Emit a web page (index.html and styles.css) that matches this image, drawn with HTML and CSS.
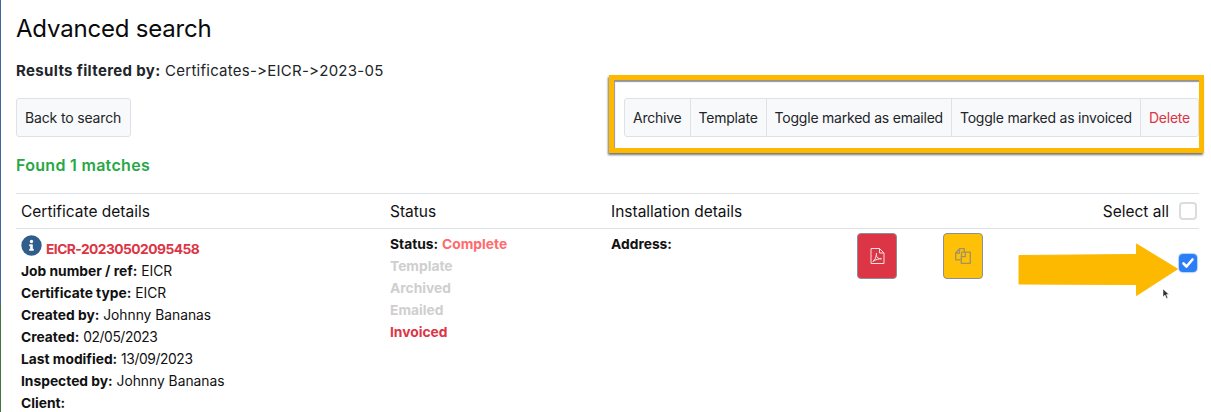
FILE: index.html
```html
<!DOCTYPE html>
<html lang="en">
<head>
<meta charset="utf-8">
<title>Advanced search</title>
<link rel="stylesheet" href="styles.css">
</head>
<body>
<main class="page">
  <h1 class="title">Advanced search</h1>
  <p class="filter"><b>Results filtered by:</b> Certificates-&gt;EICR-&gt;2023-05</p>
  <div class="toolbar">
    <button class="btn back" type="button">Back to search</button>
    <div class="group">
      <button class="btn seg" type="button">Archive</button>
      <button class="btn seg" type="button">Template</button>
      <button class="btn seg" type="button">Toggle marked as emailed</button>
      <button class="btn seg" type="button">Toggle marked as invoiced</button>
      <button class="btn seg danger" type="button">Delete</button>
    </div>
  </div>
  <p class="found">Found 1 matches</p>
  <section class="results">
    <div class="row head">
      <div class="c1">Certificate details</div>
      <div class="c2">Status</div>
      <div class="c3">Installation details</div>
      <div class="c4">Select all <span class="check"></span></div>
    </div>
    <div class="row body">
      <div class="c1 lines details">
        <div class="cert">
          <svg class="info" viewBox="0 0 512 512" aria-hidden="true"><path fill="#2f5d8c" d="M256 8a248 248 0 1 0 0 496 248 248 0 0 0 0-496zm0 110a42 42 0 1 1 0 84 42 42 0 0 1 0-84zm56 254c0 7-5 12-12 12h-88c-7 0-12-5-12-12v-24c0-7 5-12 12-12h12v-64h-12c-7 0-12-5-12-12v-24c0-7 5-12 12-12h64c7 0 12 5 12 12v100h12c7 0 12 5 12 12z"/></svg>
          <a class="cert-link">EICR-20230502095458</a>
        </div>
        <div><b>Job number / ref:</b> EICR</div>
        <div><b>Certificate type:</b> EICR</div>
        <div><b>Created by:</b> Johnny Bananas</div>
        <div><b>Created:</b> <span class="num">02/05/2023</span></div>
        <div><b>Last modified:</b> <span class="num">13/09/2023</span></div>
        <div><b>Inspected by:</b> Johnny Bananas</div>
        <div><b>Client:</b></div>
      </div>
      <div class="c2 lines">
        <div><b>Status:</b> <b class="complete">Complete</b></div>
        <div><b class="off">Template</b></div>
        <div><b class="off">Archived</b></div>
        <div><b class="off">Emailed</b></div>
        <div><b class="on">Invoiced</b></div>
      </div>
      <div class="c3 lines">
        <div><b>Address:</b></div>
      </div>
      <div class="actions">
        <span class="square red">
          <svg viewBox="0 0 14 16" aria-hidden="true"><path fill="none" stroke="#f8dfe2" stroke-width="1" stroke-linejoin="round" d="M.5.5h8.500l4.500 4.500v10.500H.5zM9 .5v4.500h4.500M2.300 13.500c2-1 3.700-4.500 3.700-8.500 0 0 .2 1.500-.2 2.800.6 2 2.700 3.200 5.200 3-2.800-.2-6 .8-8.700 2.700z"/></svg>
        </span>
        <span class="square amber">
          <svg viewBox="0 0 16 16" aria-hidden="true"><path fill="none" stroke="#a39262" stroke-width="1.300" stroke-linejoin="round" d="M5.500 11.800H.7V5L4.500.7h4.800v3.500M.7 5h3.800V.7M6.800 4.200h8.500v11.100H6.300V8.700zM6.300 8.700h4V4.200"/></svg>
        </span>
      </div>
      <div class="c4 tick-cell">
        <span class="check checked">
          <svg viewBox="0 0 18 18" aria-hidden="true"><path fill="none" stroke="#fff" stroke-width="2.600" stroke-linecap="round" stroke-linejoin="round" d="M4.500 9.500l3 3L13.500 5.500"/></svg>
        </span>
      </div>
    </div>
  </section>
</main>
<div class="edge"></div>
<div class="callout"></div>
<svg class="arrow" viewBox="0 0 162 56" aria-hidden="true"><path fill="#fdb900" stroke="#fdb900" stroke-width="1" stroke-linejoin="round" d="M1 12.500L118.500 11.500V1L159.500 26 118.500 52.500V41.500L1 41z"/></svg>
<svg class="cursor" viewBox="0 0 8 12" aria-hidden="true"><path fill="#333" stroke="#fff" stroke-width=".5" d="M1 1v8l2-2 1.500 3.500 1.300-.6L4.500 6.500H7z"/></svg>
</body>
</html>
```
FILE: styles.css
```css
* { box-sizing: border-box; }
html, body { margin: 0; height: 100%; }
body {
  position: relative;
  overflow: hidden;
  background: #fff;
  color: #212529;
  font-family: Inter, "Liberation Sans", sans-serif;
  font-size: 14px;
}
.page { padding: 13px 12px 0 16px; }
.title {
  margin: 0;
  font-size: 24px;
  font-weight: 400;
  line-height: 32px;
  color: #0a0a0a;
  letter-spacing: -.2px;
}
.filter {
  margin: 15px 0 0;
  font-size: 15px;
  line-height: 22px;
  letter-spacing: .25px;
}
.filter b { font-weight: 700; font-size: 15px; letter-spacing: .35px; }
.toolbar {
  display: flex;
  justify-content: space-between;
  align-items: flex-start;
  margin-top: 16px;
}
.btn {
  height: 39px;
  padding: 0 8px;
  border: 1px solid #dee2e6;
  border-radius: 3px;
  background: #f8f9fa;
  color: #212529;
  font: 400 14px/1 Inter, "Liberation Sans", sans-serif;
  letter-spacing: -.22px;
  white-space: nowrap;
}
.back { padding-right: 9px; letter-spacing: -.15px; }
.group { display: flex; }
.group .seg { margin-left: -1px; border-radius: 0; }
.group .seg:first-child { margin-left: 0; border-radius: 3px 0 0 3px; }
.group .seg:last-child { border-radius: 0 3px 3px 0; }
.danger { color: #dc3545; }
.found {
  margin: 17px 0 0;
  font-size: 16px;
  font-weight: 600;
  line-height: 22px;
  color: #28a745;
  letter-spacing: .3px;
}
.results { margin-top: 17px; }
.row { display: flex; }
.head {
  height: 36px;
  align-items: center;
  border-top: 1px solid #dee2e6;
  border-bottom: 1px solid #dee2e6;
  font-size: 15.5px;
  color: #111;
}
.c1 { width: 374px; padding-left: 5px; }
.c2 { width: 221px; }
.c3 { width: 246px; }
.head .c3 { width: auto; flex: 1; }
.head .c4 { display: flex; align-items: center; gap: 10px; padding-right: 2px; }
.check {
  display: block;
  width: 18px;
  height: 18px;
  border: 2px solid #dcdcdc;
  border-radius: 4px;
  background: #fff;
}
.body { padding-top: 4px; }
.lines { font-size: 13.8px; line-height: 22px; color: #111; }
.details { padding-top: 5px; }
.lines > div { height: 22px; white-space: nowrap; }
.lines b { font-weight: 700; }
.cert { display: flex; align-items: flex-end; gap: 4px; }
.info { width: 21px; height: 21px; flex: none; margin-bottom: 4px; }
.cert-link { color: #dc3545; font-weight: 700; letter-spacing: -.55px; }
.num { letter-spacing: -.4px; }
.complete { color: #ff6b6b; }
.off { color: #cfcfcf; }
.on { color: #dc3545; }
.actions { width: 126px; display: flex; gap: 46px; }
.square {
  display: flex;
  align-items: center;
  justify-content: center;
  width: 40px;
  height: 46px;
  border: 1px solid #8a8f98;
  border-radius: 4px;
}
.square svg { width: 15px; height: 16px; }
.amber svg { width: 16px; }
.red { background: #dc3545; }
.amber { background: #ffc107; }
.tick-cell {
  flex: 1;
  display: flex;
  justify-content: flex-end;
  padding: 21px 2px 0 0;
}
.checked { background: #2c7ef7; border-color: #2c7ef7; box-shadow: 0 0 1px 1px rgba(44,126,247,.35); position: relative; }
.checked svg { display: block; position: absolute; inset: -2px; width: 18px; height: 18px; }
.edge {
  position: absolute;
  left: 0; top: 0; bottom: 0;
  width: 1px;
  background: linear-gradient(#44659b 0 305px, #44743f 305px);
}
.callout {
  position: absolute;
  left: 609px; top: 75px;
  width: 595px; height: 78px;
  border: 5px solid #fdb900;
  box-shadow: -1px 2px 2px rgba(60,60,60,.7), inset 1px 2px 1px rgba(60,60,60,.55);
}
.arrow {
  position: absolute;
  left: 1018px; top: 243px;
  width: 162px; height: 56px;
}
.cursor {
  position: absolute;
  left: 1162px; top: 288px;
  width: 8px; height: 12px;
}
```
